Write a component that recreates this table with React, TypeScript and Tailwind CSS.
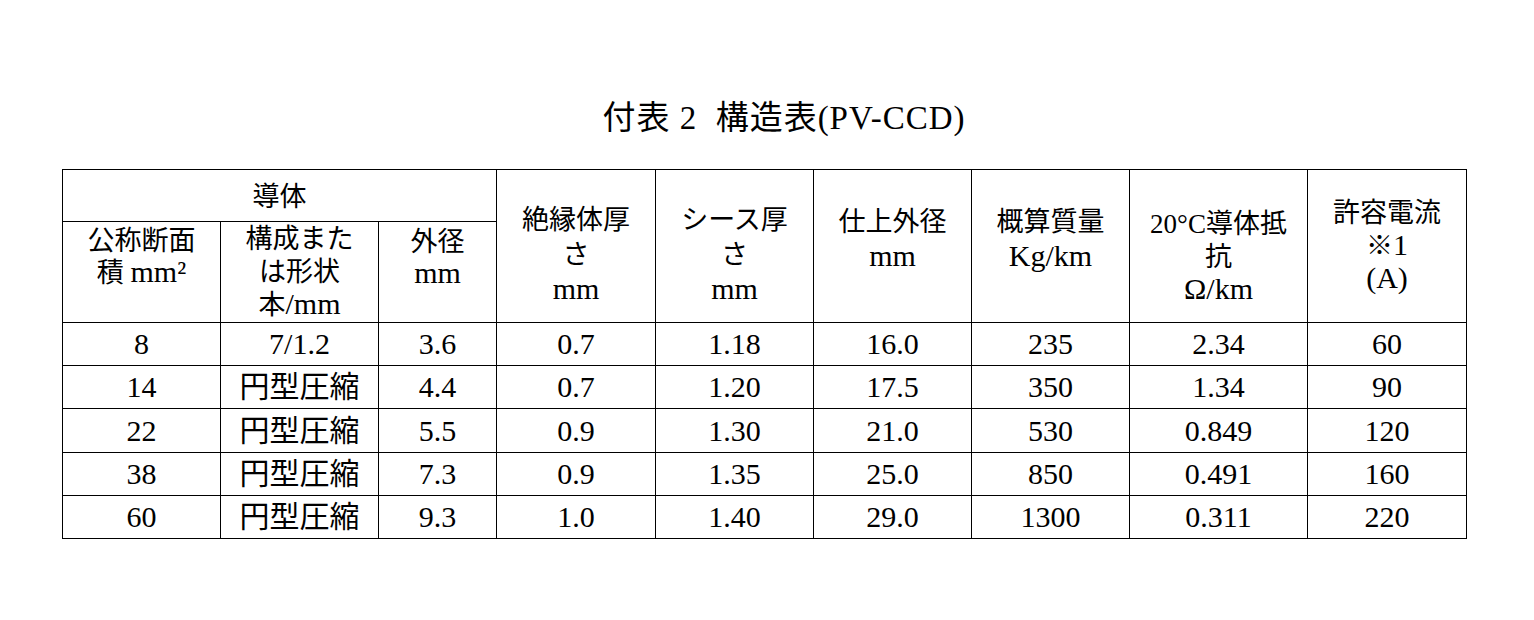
import React from "react";

const rows: string[][] = [
  ["8", "7/1.2", "3.6", "0.7", "1.18", "16.0", "235", "2.34", "60"],
  ["14", "円型圧縮", "4.4", "0.7", "1.20", "17.5", "350", "1.34", "90"],
  ["22", "円型圧縮", "5.5", "0.9", "1.30", "21.0", "530", "0.849", "120"],
  ["38", "円型圧縮", "7.3", "0.9", "1.35", "25.0", "850", "0.491", "160"],
  ["60", "円型圧縮", "9.3", "1.0", "1.40", "29.0", "1300", "0.311", "220"],
];

const rowHeights = ["h-[43px]", "h-[43px]", "h-[44px]", "h-[43px]", "h-[43px]"];

function L({ children }: { children: React.ReactNode }) {
  return <span className="text-[30px] leading-none">{children}</span>;
}

export default function App() {
  return (
    <div className="w-[1534px] h-[620px] bg-white text-black font-['Liberation_Serif','Noto_Sans_CJK_JP',serif]">
      <div className="pt-[98px] ml-[62px] w-[1405px]">
        <div className="h-[40px] text-center pl-[39px] text-[33px] tracking-[1px] leading-[40px] whitespace-pre">
          付表 2  構造表(PV-CCD)
        </div>
        <table className="mt-[31px] w-[1405px] table-fixed border-collapse border border-black">
          <colgroup>
            <col className="w-[158px]" />
            <col className="w-[158px]" />
            <col className="w-[118px]" />
            <col className="w-[159px]" />
            <col className="w-[158px]" />
            <col className="w-[158px]" />
            <col className="w-[158px]" />
            <col className="w-[178px]" />
            <col className="w-[159px]" />
          </colgroup>
          <tbody className="text-[27px]">
            <tr>
              <td colSpan={3} className="h-[52px] border border-black text-center align-middle leading-[32px] pt-[2px]">
                導体
              </td>
              <td rowSpan={2} className="border border-black text-center align-top leading-[35px] pt-[33px] whitespace-nowrap">
                絶縁体厚<br />さ<br /><L>mm</L>
              </td>
              <td rowSpan={2} className="border border-black text-center align-top leading-[35px] pt-[33px] whitespace-nowrap">
                シース厚<br />さ<br /><L>mm</L>
              </td>
              <td rowSpan={2} className="border border-black text-center align-top leading-[35px] pt-[35px] whitespace-nowrap">
                仕上外径<br /><L>mm</L>
              </td>
              <td rowSpan={2} className="border border-black text-center align-top leading-[35px] pt-[35px] whitespace-nowrap">
                概算質量<br /><L>Kg/km</L>
              </td>
              <td rowSpan={2} className="border border-black text-center align-top leading-[33px] pt-[38px] whitespace-nowrap">
                20°C導体抵<br />抗<br /><L>Ω/km</L>
              </td>
              <td rowSpan={2} className="border border-black text-center align-top leading-[33px] pt-[27px] whitespace-nowrap">
                許容電流<br />※<L>1</L><br /><L>(A)</L>
              </td>
            </tr>
            <tr>
              <td className="h-[101px] border border-black text-center align-top leading-[32px] pt-[3px] whitespace-nowrap">
                公称断面<br />積 <L>mm²</L>
              </td>
              <td className="border border-black text-center align-top leading-[33px] pt-[1px] whitespace-nowrap">
                構成また<br />は形状<br />本<L>/mm</L>
              </td>
              <td className="border border-black text-center align-top leading-[32px] pt-[4px] whitespace-nowrap">
                外径<br /><L>mm</L>
              </td>
            </tr>
          </tbody>
          <tbody className="text-[30px]">
            {rows.map((r, i) => (
              <tr key={i}>
                {r.map((c, j) => (
                  <td
                    key={j}
                    className={`${rowHeights[i]} border border-black text-center align-middle leading-[34px] whitespace-nowrap`}
                  >
                    {c}
                  </td>
                ))}
              </tr>
            ))}
          </tbody>
        </table>
      </div>
    </div>
  );
}
